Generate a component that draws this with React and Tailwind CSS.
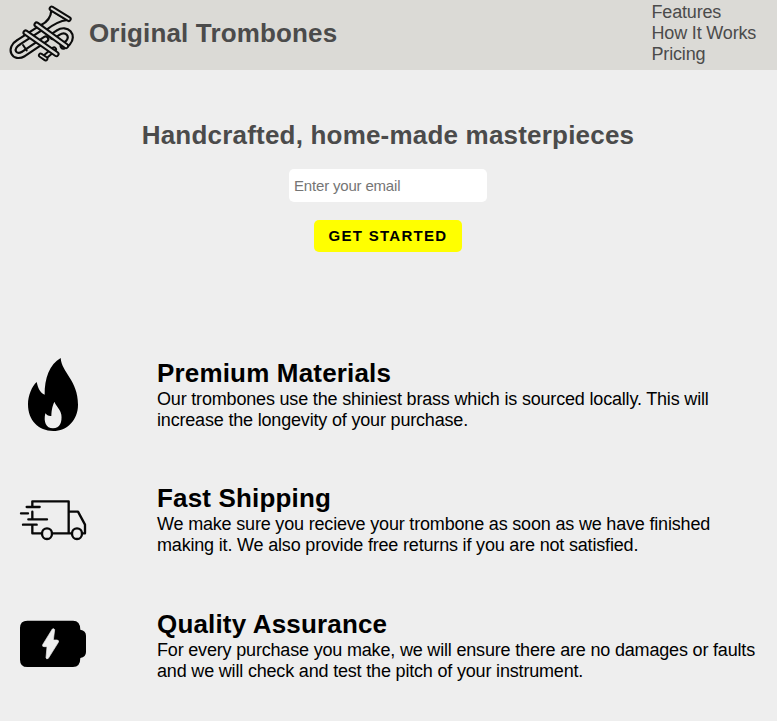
const BG = "#dbdad6";

// Hollow tube: a wide dark line with a lighter core.
function Tube({ d, w = 17, core = 8 }) {
  return (
    <>
      <path d={d} stroke="#0c0c0c" strokeWidth={w} />
      <path d={d} stroke={BG} strokeWidth={core} />
    </>
  );
}

function Trombone() {
  return (
    <svg className="h-[60px] w-[70px] shrink-0" viewBox="24 9 210 180" fill="none" strokeLinecap="round" strokeLinejoin="round">
      <path d="M154 31C153 51 144 65 122 76L137 91C162 71 184 62 202 60Z" fill={BG} stroke="#0c0c0c" strokeWidth="6.5" />
      <Tube d="M155 26L206 57" w={18} core={6} />
      <Tube d="M122 84L57 126C24 146 43 178 70 162L137 117" w={22} core={9} />
      <path d="M69 135L80 151" stroke="#0c0c0c" strokeWidth="6" />
      <Tube d="M158 109L174 98C201 81 222 108 204 128L190 138" w={22} core={9} />
      <Tube d="M134 172L162 148" w={18} core={6} />
      <Tube d="M122 166L137 176" w={16} core={5} />
      <Tube d="M110 74L198 138" w={19} core={7} />
      <Tube d="M77 98L169 162" w={19} core={7} />
    </svg>
  );
}

function Flame() {
  return (
    <svg className="h-[90px] w-[90px]" viewBox="0 0 270 270">
      <path fillRule="evenodd" d="M152 24C155 68 204 91 204 164C204 211 170 243 130 243C85 243 54 211 54 163C54 136 66 109 80 96C84 112 88 127 104 134C103 85 119 43 152 24ZM133 155C128 168 125 176 124 198C116 199 110 195 106 190C100 216 108 235 129 235C150 235 157 215 154 194C151 177 139 169 133 155Z" />
    </svg>
  );
}

function Truck() {
  return (
    <svg className="h-[60px] w-[90px]" viewBox="0 0 270 180" fill="none" stroke="#080808" strokeWidth="7" strokeLinecap="round" strokeLinejoin="round">
      <path d="M67 49V34H176V130H126M67 65V87M67 105V130H95M176 65H204L225 104V130H216M176 130H185M50 51H89M33 70H54M55 88H111M39 104H80" />
      <ellipse cx="111" cy="131" rx="15" ry="16" />
      <ellipse cx="201" cy="131" rx="15" ry="16" />
    </svg>
  );
}

function Battery() {
  return (
    <svg className="mt-[9px] h-[65px] w-[90px] self-start" viewBox="0 0 270 195">
      <path d="M52 32H189Q211 32 211 59Q228 62 228 77V126Q228 141 211 144Q211 171 189 171H52Q30 171 30 149V54Q30 32 52 32Z" />
      <path d="M127 57L98 104Q96 110 102 110H111L108 143Q109 149 115 145L145 97Q148 91 141 90H130L134 59Q132 54 127 57Z" fill="#eee" stroke="#eee" strokeWidth="2" />
    </svg>
  );
}

function Feature({ icon, title, children }) {
  return (
    <section className="flex h-[90px] items-start">
      <div className="flex h-[90px] w-[147px] shrink-0 items-center">{icon}</div>
      <div className="pt-[7px]">
        <h2 className="text-[26px] font-bold leading-[32px] tracking-[0.17px]">{title}</h2>
        <p className="whitespace-nowrap text-[18px] leading-[21px] tracking-[-0.18px]">{children}</p>
      </div>
    </section>
  );
}

export default function App() {
  return (
    <div className="h-[721px] overflow-hidden bg-[#eee] font-['Liberation_Sans',Arial,sans-serif] text-black">
      <header className="flex h-[70px] justify-between bg-[#dbdad6] text-[#4b4b4b]">
        <div className="flex pl-2 pt-[3px]">
          <Trombone />
          <h1 className="ml-[11px] mt-[14px] text-[26px] font-bold leading-[32px] tracking-[0.15px]">Original Trombones</h1>
        </div>
        <nav className="flex w-[125.5px] flex-col pt-[2px] text-[18px] leading-[21px] tracking-[-0.17px]">
          <a>Features</a>
          <a>How It Works</a>
          <a>Pricing</a>
        </nav>
      </header>
      <main>
        <div className="flex h-[280px] flex-col items-center pr-px pt-[49px]">
          <h2 className="text-[26px] font-bold leading-[32px] tracking-[0.2px] text-[#4b4b4b]">Handcrafted, home-made masterpieces</h2>
          <input className="mt-[18px] h-[33px] w-[198px] rounded-[5px] bg-white px-[5px] text-[15px] tracking-[-0.18px] outline-none placeholder:text-[#757575]" placeholder="Enter your email" />
          <button className="mt-[18px] h-8 w-[148px] rounded-[5px] bg-[#ff0] text-[15px] font-bold tracking-[1.3px]">GET STARTED</button>
        </div>
        <div className="flex flex-col pl-[10px]">
          <Feature icon={<Flame />} title="Premium Materials">
            Our trombones use the shiniest brass which is sourced locally. This will<br />increase the longevity of your purchase.
          </Feature>
          <div className="mt-[35px] mb-[36px]">
            <Feature icon={<Truck />} title="Fast Shipping">
              We make sure you recieve your trombone as soon as we have finished<br />making it. We also provide free returns if you are not satisfied.
            </Feature>
          </div>
          <Feature icon={<Battery />} title="Quality Assurance">
            For every purchase you make, we will ensure there are no damages or faults<br />and we will check and test the pitch of your instrument.
          </Feature>
        </div>
      </main>
    </div>
  );
}
